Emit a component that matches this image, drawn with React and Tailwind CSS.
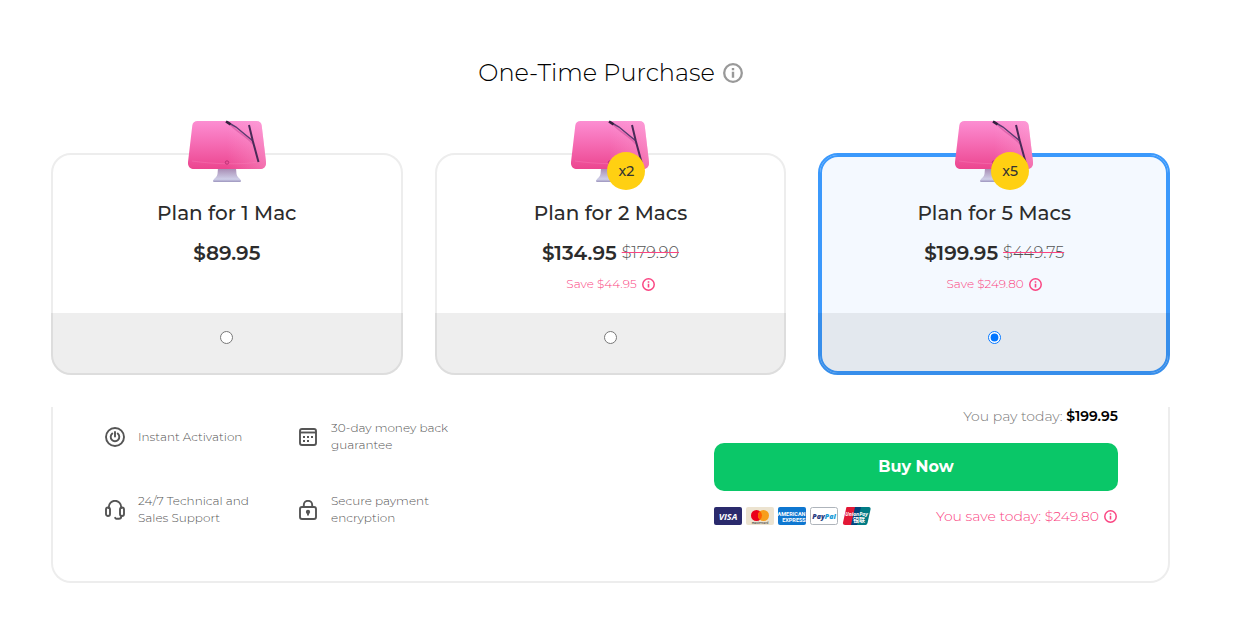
import { useState } from "react";

const plans = [
  { id: 1, title: "Plan for 1 Mac", price: "$89.95" },
  {
    id: 2,
    title: "Plan for 2 Macs",
    price: "$134.95",
    oldPrice: "$179.90",
    save: "$44.95",
    badge: "x2",
  },
  {
    id: 5,
    title: "Plan for 5 Macs",
    price: "$199.95",
    oldPrice: "$449.75",
    save: "$249.80",
    badge: "x5",
  },
];

const InfoIcon = ({ size, className }) => (
  <svg width={size} height={size} viewBox="0 0 20 20" fill="none" stroke="currentColor" className={className}>
    <circle cx="10" cy="10" r="8.800" strokeWidth="2.300" />
    <path d="M10 8.800v6M10 5v2.300" strokeWidth="2.400" />
  </svg>
);

const MacIcon = () => (
  <svg width="78" height="62" viewBox="0 0 78 62" aria-hidden="true">
    <defs>
      <linearGradient id="screen" x1="0" y1="0" x2="0" y2="1">
        <stop offset="0" stopColor="#fc8ed2" />
        <stop offset="0.5" stopColor="#f56ab2" />
        <stop offset="1" stopColor="#ec468f" />
      </linearGradient>
      <linearGradient id="shine" x1="0" y1="0" x2="1" y2="0">
        <stop offset="0.5" stopColor="#ffb0de" stopOpacity="0" />
        <stop offset="1" stopColor="#ffb0de" stopOpacity="0.4" />
      </linearGradient>
      <linearGradient id="stand" x1="0" y1="0" x2="0" y2="1">
        <stop offset="0" stopColor="#a588b0" />
        <stop offset="0.8" stopColor="#cfcfe8" />
        <stop offset="1" stopColor="#9c94bd" />
      </linearGradient>
    </defs>
    <path d="M30 48h18l.5 6c.5 3 3 4 4.500 6.500 0 1.200-.5 1.500-1.500 1.500H26.500c-1 0-1.500-.3-1.500-1.500 1.500-2.500 4-3.500 4.500-6.500z" fill="url(#stand)" />
    <path d="M9.500 1h59c3 0 4.800 1.500 5.200 4.500L78 42c.5 4-2 7-6 7H6c-4 0-6.500-3-6-7L4.300 5.500C4.700 2.500 6.500 1 9.500 1z" fill="url(#screen)" />
    <path d="M9.500 1h59c3 0 4.800 1.500 5.200 4.500L78 42c.5 4-2 7-6 7H6c-4 0-6.500-3-6-7L4.300 5.500C4.700 2.500 6.500 1 9.500 1z" fill="url(#shine)" />
    <path d="M4 41c20 3 49 4 66 1" fill="none" stroke="#f987bd" strokeWidth="0.700" opacity="0.500" />
    <path d="M41 3C47 11 57 15 65 24" fill="none" stroke="#c24491" strokeWidth="1.500" opacity="0.450" />
    <path d="M38.500 1.500L48 7 57 14.500 65 21" fill="none" stroke="#5a3a70" strokeWidth="1.500" />
    <path d="M38 1.500l4.500 2.800" stroke="#35213f" strokeWidth="2.600" />
    <path d="M61 5l3.800 16L70.500 42" fill="none" stroke="#4a2a58" strokeWidth="2" />
    <circle cx="39" cy="42.500" r="1.700" fill="none" stroke="#b52e70" strokeWidth="0.900" />
  </svg>
);

const PowerIcon = () => (
  <svg width="20" height="20" viewBox="0 0 20 20" fill="none" stroke="#555" strokeWidth="1.900" strokeLinecap="round" className="shrink-0">
    <circle cx="10" cy="10" r="9" />
    <path d="M10 5v4.500M7.300 6.600a4.300 4.300 0 1 0 5.400 0" />
  </svg>
);

const HeadsetIcon = () => (
  <svg width="20" height="20" viewBox="0 0 20 20" fill="none" stroke="#555" strokeWidth="1.900" strokeLinecap="round" className="shrink-0">
    <path d="M3.800 8V7a6.200 6.200 0 0 1 12.400 0v1" />
    <rect x="1" y="7.500" width="4" height="8.500" rx="2" />
    <rect x="15" y="7.500" width="4" height="8.500" rx="2" />
    <path d="M16.200 16v.5a2.300 2.300 0 0 1-2.300 2.300h-2.300a1.500 1.500 0 0 1-1.500-1" />
  </svg>
);

const CalendarIcon = () => (
  <svg width="20" height="20" viewBox="0 0 20 20" fill="none" stroke="#555" strokeWidth="1.900" className="shrink-0">
    <rect x="2" y="2" width="16" height="16" rx="2" />
    <path d="M2 5.500h16" />
    <path d="M5 10h2M9 10h2M13 10h2M5 14h2M9 14h2" />
  </svg>
);

const LockIcon = () => (
  <svg width="20" height="20" viewBox="0 0 20 20" fill="none" stroke="#555" strokeWidth="1.900" className="shrink-0">
    <rect x="2" y="7" width="16" height="12" rx="2" />
    <path d="M5.800 7V5a4.200 4.200 0 0 1 8.400 0v2" />
    <circle cx="10" cy="12" r="1.200" fill="#555" />
    <path d="M10 12v3.500" />
  </svg>
);

const features = [
  { text: "Instant Activation", Icon: PowerIcon },
  { text: "30-day money back guarantee", Icon: CalendarIcon },
  { text: "24/7 Technical and Sales Support", Icon: HeadsetIcon },
  { text: "Secure payment encryption", Icon: LockIcon },
];

const PaymentMethods = () => (
  <div className="flex gap-1">
    <svg width="28" height="18" viewBox="0 0 28 18">
      <rect width="28" height="18" rx="2" fill="#2a2a6c" />
      <text x="14" y="13" textAnchor="middle" fontFamily="Open Sans, sans-serif" fontSize="9" fontWeight="700" fontStyle="italic" fill="#fff">VISA</text>
    </svg>
    <svg width="28" height="18" viewBox="0 0 28 18">
      <rect width="28" height="18" rx="2" fill="#ece3d0" />
      <circle cx="10.500" cy="8.500" r="5.500" fill="#eb001b" />
      <circle cx="17.500" cy="8.500" r="5.500" fill="#f79e1b" />
      <path d="M14 4.300a5.500 5.500 0 0 1 0 8.400 5.500 5.500 0 0 1 0-8.400z" fill="#ff5f00" />
      <text x="14" y="17" textAnchor="middle" fontFamily="Open Sans, sans-serif" fontSize="3" fontWeight="600" fill="#333">mastercard</text>
    </svg>
    <svg width="28" height="18" viewBox="0 0 28 18">
      <rect width="28" height="18" rx="2" fill="#0f77d0" />
      <text x="13.500" y="8.500" textAnchor="middle" fontFamily="Roboto, sans-serif" fontSize="5.500" fontWeight="700" fill="#fff">AMERICAN</text>
      <text x="16" y="14.500" textAnchor="middle" fontFamily="Roboto, sans-serif" fontSize="5.500" fontWeight="700" fill="#fff">EXPRESS</text>
    </svg>
    <svg width="28" height="18" viewBox="0 0 28 18">
      <rect x="0.500" y="0.500" width="27" height="17" rx="2" fill="#fff" stroke="#aeb4bb" />
      <text x="14" y="11.500" textAnchor="middle" fontFamily="Open Sans, sans-serif" fontSize="7" fontWeight="800" fontStyle="italic" fill="#253b80">
        Pay<tspan fill="#179bd7">Pal</tspan>
      </text>
    </svg>
    <svg width="29" height="18" viewBox="0 0 29 18">
      <path d="M5 0h9l-4 18H3Q.5 18 1 15.500L4 2Q4 0 5 0z" fill="#e21836" />
      <path d="M13 0h7l-4 18H9z" fill="#00447c" />
      <path d="M19 0h8q2 0 1.500 2.500L25.500 16q-.5 2-2 2H15z" fill="#007b84" />
      <text x="14.500" y="9" textAnchor="middle" fontFamily="Open Sans, sans-serif" fontSize="5" fontWeight="700" fontStyle="italic" fill="#fff">UnionPay</text>
      <text x="17" y="15" textAnchor="middle" fontFamily="Noto Sans CJK SC, sans-serif" fontSize="6" fontWeight="700" fill="#fff">银联</text>
    </svg>
  </div>
);

const PlanCard = ({ plan, selected, onSelect }) => (
  <label
    className={`relative flex flex-col rounded-[20px] border-2 pt-[46px] text-center cursor-pointer ${
      selected
        ? "border-[#3b99fc] bg-[#f4f9ff] shadow-[inset_0_0_0_2px_#3b99fc]"
        : "border-[#ededed] bg-white"
    }`}
  >
    <span className="absolute -top-[35px] left-1/2 -translate-x-1/2">
      <MacIcon />
      {plan.badge && (
        <span className="absolute top-8 left-9 flex h-[38px] w-[38px] items-center justify-center rounded-full bg-[#ffd012] text-sm font-medium text-[#333]">
          {plan.badge}
        </span>
      )}
    </span>
    <span className="text-xl leading-6 font-medium">{plan.title}</span>
    <span className="mt-4 flex items-center justify-center gap-[5px] leading-6">
      <span className="text-xl leading-6 font-semibold">{plan.price}</span>
      {plan.oldPrice && (
        <s className="text-base leading-6 font-light text-[#555] decoration-[#fa4582]">
          {plan.oldPrice}
        </s>
      )}
    </span>
    {plan.save && (
      <span className="mt-[11px] flex items-center justify-center gap-[5px] text-xs font-light text-[#fa4582]">
        Save {plan.save}
        <InfoIcon size={13} />
      </span>
    )}
    <span className="mt-auto block pt-[21px]">
      <span className="-mx-[2px] -mb-[2px] flex h-[62px] items-start justify-center rounded-b-[20px] bg-black/[0.065] pt-[18px]">
        <input
          type="radio"
          name="plan"
          checked={selected}
          onChange={onSelect}
          className="h-[13px] w-[13px]"
        />
      </span>
    </span>
  </label>
);

const App = () => {
  const [planId, setPlanId] = useState(5);
  const current = plans.find((plan) => plan.id === planId);

  return (
    <div className="bg-white pt-[57px] pr-[75px] pb-12 pl-[51px] font-['Montserrat','Inter',sans-serif] text-[#2c2c2c]">
      <h2 className="flex items-center justify-center gap-2 text-2xl leading-8 font-light text-black">
        One-Time Purchase
        <InfoIcon size={20} className="text-[#999]" />
      </h2>

      {/* Plans */}
      <div className="mt-16 grid grid-cols-3 gap-8">
        {plans.map((plan) => (
          <PlanCard
            key={plan.id}
            plan={plan}
            selected={plan.id === planId}
            onSelect={() => setPlanId(plan.id)}
          />
        ))}
      </div>

      {/* Summary */}
      <div className="mt-8 flex items-start justify-between rounded-b-[20px] border-x-2 border-b-2 border-[#ededed] pr-[50px] pb-[54px] pl-[52px]">
        <ul className="grid grid-cols-[160px_160px] gap-x-[33px] gap-y-[39px] pt-[13px]">
          {features.map(({ text, Icon }) => (
            <li key={text} className="flex h-[34px] items-center gap-[13px]">
              <Icon />
              <span className="pb-[2px] text-xs leading-[17px] font-light text-[#555]">
                {text}
              </span>
            </li>
          ))}
        </ul>

        <div className="w-[404px]">
          <p className="text-right text-sm leading-[18px] font-light text-[#777]">
            You pay today:{" "}
            <span className="font-semibold text-black">{current.price}</span>
          </p>
          <button
            type="button"
            className="mt-[18px] h-12 w-full rounded-[10px] bg-[#0ac768] text-base font-bold text-white"
          >
            Buy Now
          </button>
          <div className="mt-4 flex h-[18px] items-center justify-between">
            <PaymentMethods />
            {current.save && (
              <p className="flex items-center gap-[5px] pr-px text-sm leading-[18px] font-light text-[#fa4582]">
                You save today: {current.save}
                <InfoIcon size={13} />
              </p>
            )}
          </div>
        </div>
      </div>
    </div>
  );
};

export default App;
